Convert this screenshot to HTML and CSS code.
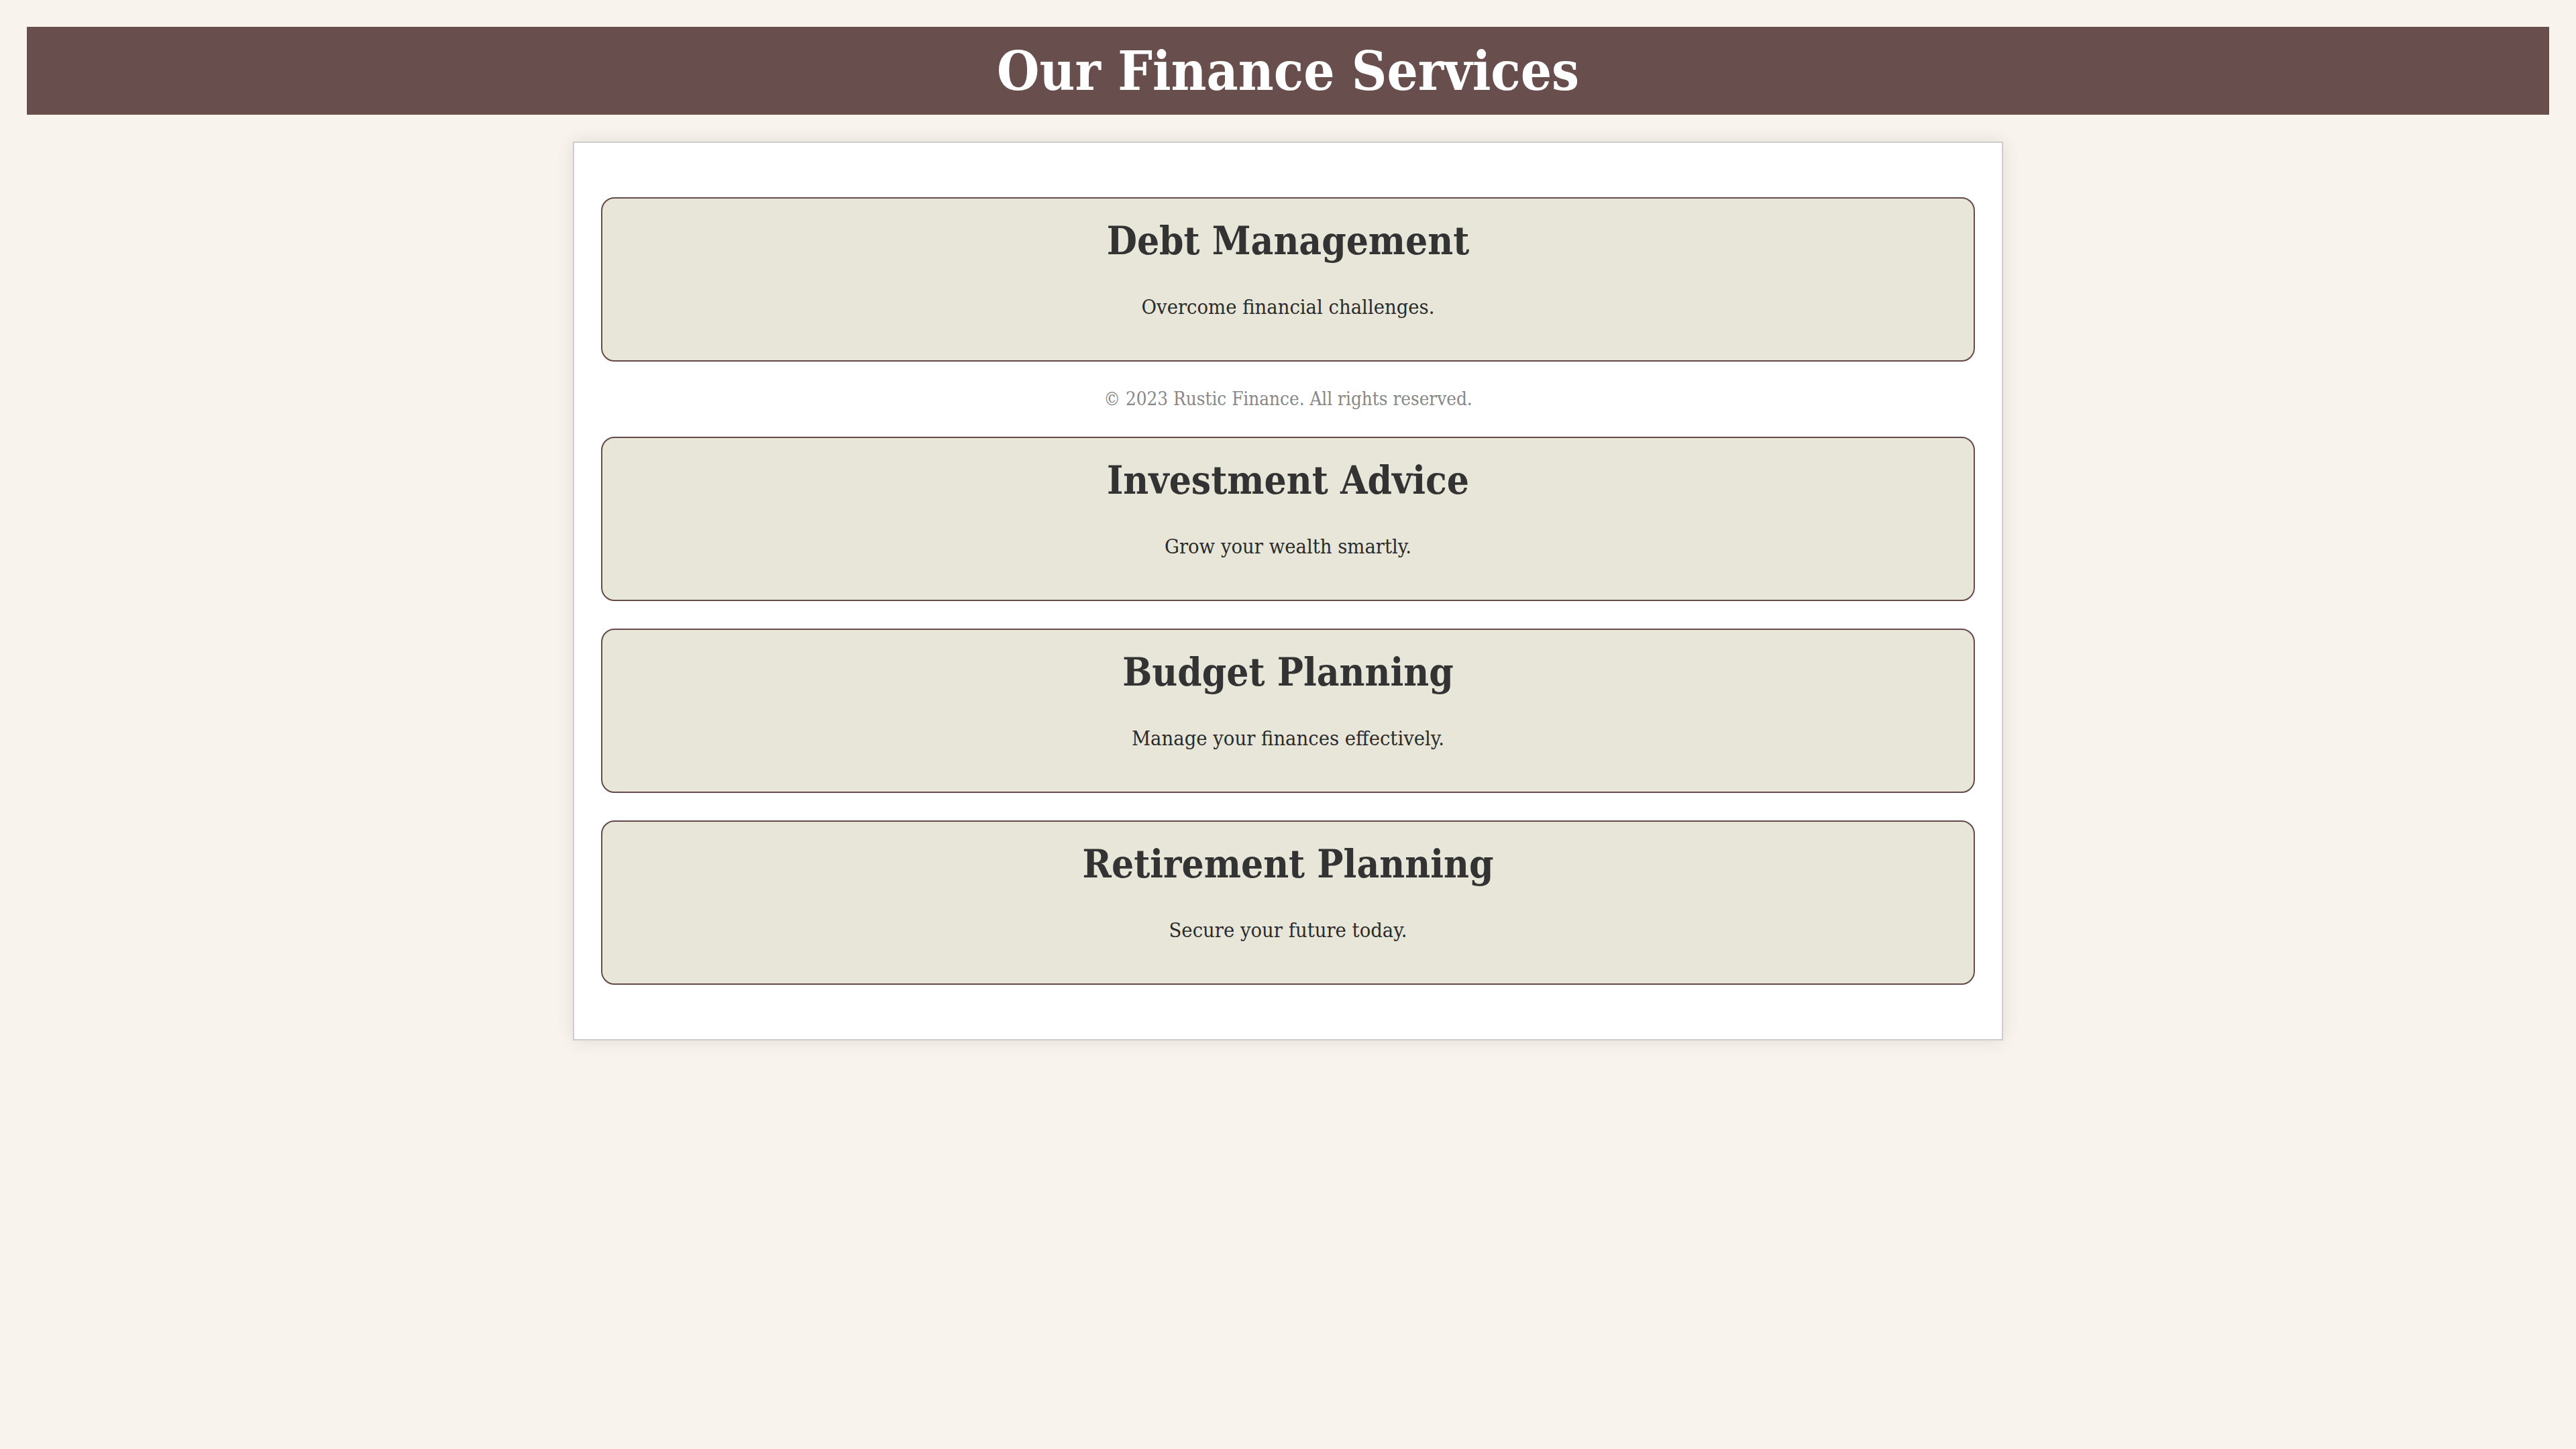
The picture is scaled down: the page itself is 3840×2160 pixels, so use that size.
FILE: index.html
```html
<!DOCTYPE html>
<html lang="en">
<head>
<meta charset="utf-8">
<title>Our Finance Services</title>
<link rel="stylesheet" href="styles.css">
</head>
<body>
<header class="site-header">
  <h1 class="site-title">Our Finance Services</h1>
</header>
<main class="container">
  <section class="service-card">
    <h2 class="service-title">Debt Management</h2>
    <p class="service-text">Overcome financial challenges.</p>
  </section>
  <footer class="site-footer">© 2023 Rustic Finance. All rights reserved.</footer>
  <section class="service-card">
    <h2 class="service-title">Investment Advice</h2>
    <p class="service-text">Grow your wealth smartly.</p>
  </section>
  <section class="service-card">
    <h2 class="service-title">Budget Planning</h2>
    <p class="service-text">Manage your finances effectively.</p>
  </section>
  <section class="service-card">
    <h2 class="service-title">Retirement Planning</h2>
    <p class="service-text">Secure your future today.</p>
  </section>
</main>
</body>
</html>
```
FILE: styles.css
```css
html, body {
  margin: 0;
}
body {
  padding: 40px;
  background: #f8f4ed;
  font-family: "DejaVu Serif Condensed", "DejaVu Serif", "Liberation Serif", serif;
  font-stretch: condensed;
  color: #333;
}
.site-header {
  background: #694e4e;
  padding: 20px 0;
  text-align: center;
}
.site-title {
  margin: 0;
  font-size: 81px;
  line-height: 91px;
  font-weight: 700;
  color: #fff;
}
.container {
  box-sizing: border-box;
  width: 2132px;
  margin: 40px auto 0;
  padding: 40px;
  background: #fff;
  border: 2px solid #cdcdcd;
  box-shadow: 0 0 25px rgba(0, 0, 0, 0.1);
}
.service-card {
  box-sizing: border-box;
  height: 245px;
  margin: 41px 0;
  padding: 29px 25px 28px;
  background: #e8e6d8;
  border: 2px solid #654a4a;
  border-radius: 20px;
  text-align: center;
}
.service-title {
  margin: 0 0 46px;
  font-size: 58px;
  line-height: 68px;
  font-weight: 700;
  color: #333;
}
.service-text {
  margin: 0;
  font-size: 30.6px;
  line-height: 37px;
  color: #2b2b2b;
}
.site-footer {
  text-align: center;
  font-size: 27.6px;
  line-height: 30px;
  color: #888;
}
```
